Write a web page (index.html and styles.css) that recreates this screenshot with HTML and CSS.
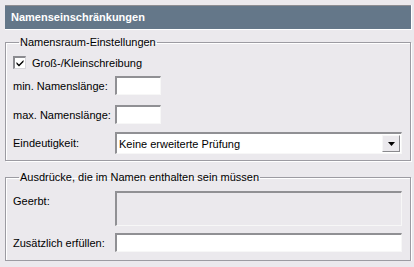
FILE: index.html
```html
<!DOCTYPE html>
<html lang="de">
<head>
    <meta charset="UTF-8">
    <title>Namenseinschränkungen</title>
    <link rel="stylesheet" href="styles.css">
</head>
<body>
    <div class="panel">
        <div class="header">Namenseinschränkungen</div>

        <fieldset class="group first">
            <legend>Namensraum-Einstellungen</legend>
            <div class="check-row">
                <span class="checkbox">
                    <svg width="8" height="8" viewBox="0 0 8 8"><path d="M0.5 3 L3 5.5 L7.5 1 L7.5 3 L3 7.5 L0.5 5 Z" fill="#000"/></svg>
                </span>
                <span>Groß-/Kleinschreibung</span>
            </div>
            <div class="row row-min">
                <span class="label">min. Namenslänge:</span>
                <span class="field small"></span>
            </div>
            <div class="row row-max">
                <span class="label">max. Namenslänge:</span>
                <span class="field small"></span>
            </div>
            <div class="row row-select">
                <span class="label">Eindeutigkeit:</span>
                <span class="select">
                    <span class="select-text">Keine erweiterte Prüfung</span>
                    <span class="select-btn">
                        <svg width="7" height="4" viewBox="0 0 7 4"><path d="M0 0 H7 L3.5 4 Z" fill="#000"/></svg>
                    </span>
                </span>
            </div>
        </fieldset>

        <fieldset class="group second">
            <legend>Ausdrücke, die im Namen enthalten sein müssen</legend>
            <div class="row row-top">
                <span class="label top">Geerbt:</span>
                <span class="field wide tall readonly"></span>
            </div>
            <div class="row row-extra">
                <span class="label">Zusätzlich erfüllen:</span>
                <span class="field wide"></span>
            </div>
        </fieldset>
    </div>
</body>
</html>
```

FILE: styles.css
```css
body {
    margin: 0;
    background-color: #ebe9ed;
    font-family: "Liberation Sans", Arial, sans-serif;
    font-size: 11px;
    color: #000;
}
.panel {
    padding: 5px 3px 0 5px;
}
.header {
    height: 23px;
    background-color: #647789;
    border-top: 1px solid #8d8d92;
    border-bottom: 1px solid #ffffff;
    box-shadow: 1px 0 0 #ffffff;
    color: #ffffff;
    font-weight: bold;
    font-size: 11px;
    line-height: 23px;
    padding-left: 6px;
}
.group {
    margin: 0;
    border: 1px solid #9c9ba2;
    box-shadow: inset 1px 1px 0 #ffffff, 1px 1px 0 #ffffff;
    padding: 0 8px 0 7px;
}
.group legend {
    padding: 0 1px;
    margin-left: 6px;
    line-height: 13px;
}
.first {
    margin-top: 6px;
    padding-bottom: 6px;
}
.second {
    margin-top: 10px;
    padding-bottom: 8px;
}
.check-row {
    display: flex;
    align-items: center;
    gap: 6px;
    margin-top: 7px;
    height: 13px;
}
.checkbox {
    box-sizing: border-box;
    flex-shrink: 0;
    width: 13px;
    height: 13px;
    background-color: #ffffff;
    border-top: 2px solid #8b8b90;
    border-left: 2px solid #8b8b90;
    border-bottom: 1px solid #d6d5da;
    border-right: 1px solid #d6d5da;
    display: flex;
    align-items: center;
    justify-content: center;
}
.row {
    display: flex;
    align-items: center;
}
.row .label {
    width: 102px;
    flex-shrink: 0;
}
.row .label.top {
    align-self: flex-start;
    padding-top: 4px;
}
.row-min {
    margin-top: 7px;
}
.row-max {
    margin-top: 10px;
}
.row-select {
    margin-top: 8px;
}
.row-top {
    margin-top: 7px;
}
.row-extra {
    margin-top: 7px;
}
.field {
    box-sizing: border-box;
    height: 19px;
    background-color: #ffffff;
    border-top: 2px solid #909094;
    border-left: 2px solid #909094;
    border-bottom: 1px solid #f7f7f7;
    border-right: 1px solid #f7f7f7;
}
.field.small {
    width: 46px;
}
.field.wide {
    flex: 1;
}
.field.tall {
    height: 35px;
}
.field.readonly {
    background-color: #ebe9ed;
}
.select {
    flex: 1;
    box-sizing: border-box;
    height: 22px;
    display: flex;
    align-items: center;
    background-color: #ffffff;
    border-top: 2px solid #909094;
    border-left: 2px solid #909094;
    border-bottom: 1px solid #f7f7f7;
    border-right: 1px solid #f7f7f7;
    padding-right: 1px;
}
.select-text {
    flex: 1;
    padding-left: 2px;
}
.select-btn {
    box-sizing: border-box;
    width: 18px;
    height: 17px;
    background-color: #ebe9ed;
    border-top: 1px solid #f7f7f7;
    border-left: 1px solid #f7f7f7;
    border-bottom: 1px solid #8a8a8e;
    border-right: 1px solid #8a8a8e;
    display: flex;
    align-items: center;
    justify-content: center;
}
```
